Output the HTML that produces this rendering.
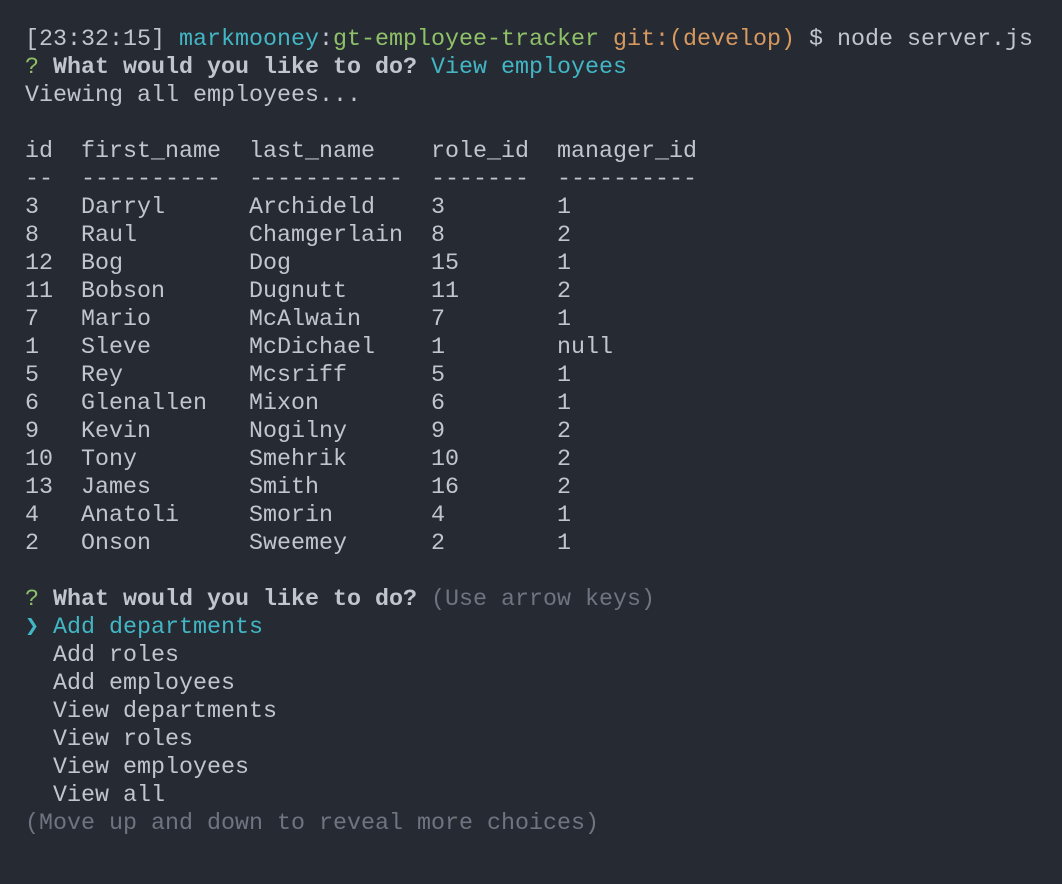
<!DOCTYPE html>
<html><head><meta charset="utf-8"><style>
html,body{margin:0;padding:0;background:#262a33;width:1062px;height:884px;overflow:hidden}
pre{margin:0;padding:26px 0 0 25px;font-family:"Liberation Mono",monospace;font-size:23.33px;line-height:28px;color:#c0c5ce;white-space:pre}
.c{color:#42b6c4}.g{color:#8fc168}.o{color:#d7995f}.b{font-weight:bold}.d{color:#6e7480}
</style></head><body><pre>[23:32:15] <span class="c">markmooney</span>:<span class="g">gt-employee-tracker</span> <span class="o">git:(develop)</span> $ node server.js
<span class="g">?</span> <span class="b">What would you like to do?</span> <span class="c">View employees</span>
Viewing all employees...

id  first_name  last_name    role_id  manager_id
--  ----------  -----------  -------  ----------
3   Darryl      Archideld    3        1
8   Raul        Chamgerlain  8        2
12  Bog         Dog          15       1
11  Bobson      Dugnutt      11       2
7   Mario       McAlwain     7        1
1   Sleve       McDichael    1        null
5   Rey         Mcsriff      5        1
6   Glenallen   Mixon        6        1
9   Kevin       Nogilny      9        2
10  Tony        Smehrik      10       2
13  James       Smith        16       2
4   Anatoli     Smorin       4        1
2   Onson       Sweemey      2        1

<span class="g">?</span> <span class="b">What would you like to do?</span> <span class="d">(Use arrow keys)</span>
<span class="c">❯ Add departments</span>
  Add roles
  Add employees
  View departments
  View roles
  View employees
  View all
<span class="d">(Move up and down to reveal more choices)</span></pre></body></html>
